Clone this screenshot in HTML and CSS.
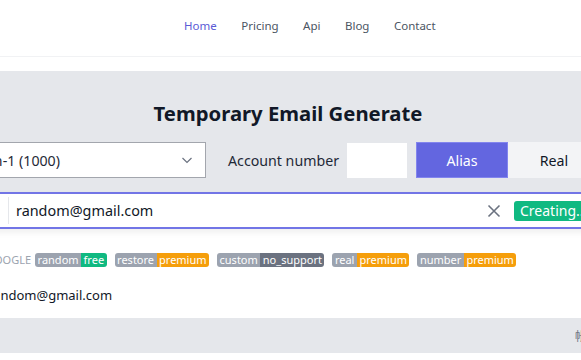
FILE: index.html
```html
<!DOCTYPE html>
<html lang="en">

<head>
    <meta charset="UTF-8">
    <meta name="viewport" content="width=device-width, initial-scale=1.0">
    <title>Temporary Email Generate</title>
    <link rel="stylesheet" href="styles.css">
</head>

<body>
    <header class="site-header">
        <nav class="main-nav">
            <a href="#" class="active">Home</a>
            <a href="#">Pricing</a>
            <a href="#">Api</a>
            <a href="#">Blog</a>
            <a href="#">Contact</a>
        </nav>
    </header>

    <div class="page">
        <section class="generator">
            <h1>Temporary Email Generate</h1>

            <div class="options-row">
                <div class="domain-select">
                    <span>gmail.com-1 (1000)</span>
                    <svg width="12" height="12" viewBox="0 0 12 12">
                        <path d="M1.5 4l4.5 4.5 4.5-4.5" fill="none" stroke="#6b7280" stroke-width="1.2" />
                    </svg>
                </div>
                <label class="account-label">Account number</label>
                <input class="account-input" type="text">
                <div class="type-switch">
                    <button class="on">Alias</button>
                    <button>Real</button>
                </div>
            </div>

            <div class="email-row">
                <div class="email-prefix">Email</div>
                <div class="email-value">random@gmail.com</div>
                <svg class="clear-icon" width="16" height="16" viewBox="0 0 16 16">
                    <path d="M2.5 2.5l11 11M13.5 2.5l-11 11" stroke="#6b7280" stroke-width="1.6" />
                </svg>
                <button class="create-btn">Creating...</button>
            </div>
        </section>

        <div class="tags-row">
            <span class="provider">GOOGLE</span>
            <span class="tag"><b>random</b><i class="free">free</i></span>
            <span class="tag"><b>restore</b><i class="premium">premium</i></span>
            <span class="tag"><b>custom</b><i class="none">no_support</i></span>
            <span class="tag"><b>real</b><i class="premium">premium</i></span>
            <span class="tag"><b>number</b><i class="premium">premium</i></span>
        </div>

        <div class="example">random@gmail.com</div>

        <table class="history">
            <thead>
                <tr>
                    <th class="wide">邮箱</th>
                    <th>状态</th>
                    <th class="right">帐号操作</th>
                </tr>
            </thead>
        </table>
    </div>
</body>

</html>
```

FILE: styles.css
```css
body {
    margin: 0;
    padding: 0;
    font-family: "Noto Sans", "Open Sans", "Noto Sans CJK SC", sans-serif;
    background-color: #fff;
    color: #111827;
    overflow: hidden;
}

.site-header {
    height: 56px;
    border-bottom: 1px solid #f1f2f4;
    display: flex;
    align-items: center;
}

.main-nav {
    display: flex;
    gap: 24.5px;
    margin-left: 184px;
    margin-top: -6px;
}

.main-nav a {
    font-size: 11.5px;
    color: #4b5563;
    text-decoration: none;
}

.main-nav a.active {
    color: #5b5bd6;
}

.page {
    width: 820px;
    margin-left: -122px;
    margin-top: 14px;
}

.generator {
    background-color: #e5e7eb;
    padding-top: 27px;
}

.generator h1 {
    margin: 0;
    text-align: center;
    font-size: 20.3px;
    line-height: 30px;
    font-weight: 700;
    color: #111827;
}

.options-row {
    display: flex;
    align-items: center;
    margin-top: 14px;
    height: 36px;
}

.domain-select {
    width: 328px;
    height: 36px;
    box-sizing: border-box;
    background: #fff;
    border: 1px solid #a3a6ad;
    display: flex;
    align-items: center;
    padding: 0 12px 0 0;
    font-size: 14.2px;
    color: #1f2937;
}

.domain-select span {
    flex: 1;
    text-align: right;
    padding-right: 121px;
}

.account-label {
    margin-left: 22px;
    font-size: 14.2px;
    color: #1f2937;
}

.account-input {
    width: 60px;
    height: 35px;
    box-sizing: border-box;
    margin-left: 8px;
    border: none;
    background: #fff;
}

.type-switch {
    display: flex;
    margin-left: 9px;
}

.type-switch button {
    width: 92px;
    height: 36px;
    border: none;
    font-family: inherit;
    font-size: 14.2px;
    background: #f3f4f6;
    color: #111827;
}

.type-switch button.on {
    background: #6366e0;
    color: #fff;
    border: 1px solid #8285ee;
}

.email-row {
    display: flex;
    align-items: center;
    margin-top: 14px;
    height: 37px;
    box-sizing: border-box;
    background: #fff;
    border: 2px solid #7275e6;
    box-shadow: 0 4px 6px rgba(0, 0, 0, 0.06);
}

.email-prefix {
    width: 128px;
    height: 27px;
    border-right: 1px solid #e5e7eb;
    color: #fff;
    font-size: 1px;
}

.email-value {
    flex: 1;
    padding-left: 7px;
    font-size: 14.4px;
    color: #111827;
}

.clear-icon {
    margin-right: 12px;
}

.create-btn {
    height: 20px;
    padding: 0 6px;
    width: 180px;
    text-align: left;
    border: none;
    border-radius: 3px;
    background: #10b981;
    color: #fff;
    font-family: inherit;
    font-size: 14px;
    line-height: 20px;
    margin-right: 2px;
}

.tags-row {
    display: flex;
    align-items: center;
    gap: 8px;
    margin-top: 24px;
    padding-left: 108px;
    font-size: 11px;
    line-height: 14px;
}

.provider {
    color: #9ca3af;
    margin-right: -4px;
}

.tag {
    display: flex;
    border-radius: 3px;
    overflow: hidden;
    color: #fff;
}

.tag b,
.tag i {
    font-weight: 400;
    font-style: normal;
    padding: 0 2.5px;
}

.tag b {
    background: #9ca3af;
}

.tag i.free {
    background: #10b981;
}

.tag i.premium {
    background: #f59e0b;
}

.tag i.none {
    background: #6b7280;
}

.example {
    margin-top: 19px;
    padding-left: 110px;
    font-size: 13px;
    line-height: 18px;
    color: #111827;
}

.history {
    width: 100%;
    margin-top: 14px;
    border-collapse: collapse;
}

.history th {
    background: #e5e7eb;
    height: 35px;
    padding: 0;
    font-size: 12px;
    font-weight: 400;
    color: #6b7280;
    text-align: left;
}

.history th.wide {
    width: 600px;
    color: #e5e7eb;
}

.history th.right {
    padding-left: 3px;
}

.history th:nth-child(2) {
    width: 94px;
    color: #e5e7eb;
}
```
